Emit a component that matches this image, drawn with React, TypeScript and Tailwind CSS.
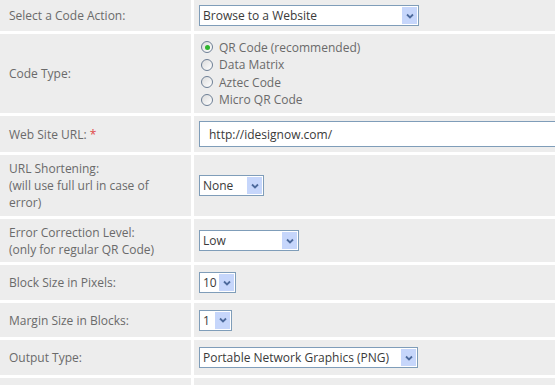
import React from 'react';

function Arrow() {
    return (
        <span className="w-[15px] h-[17px] my-[1px] mr-[1px] shrink-0 flex items-center justify-center bg-[#c6d6fb]">
            <svg width="8" height="6" viewBox="0 0 8 6">
                <path d="M1 1.5 L4 4.5 L7 1.5" fill="none" stroke="#4d6a9c" strokeWidth="1.8" />
            </svg>
        </span>
    );
}

function Select({ value, width }: { value: string; width: string }) {
    return (
        <div className={`h-[21px] ${width} border border-[#7f9db9] bg-white flex items-center text-[#3a3a3a]`}>
            <span className="flex-1 pl-[3px] whitespace-nowrap overflow-hidden">{value}</span>
            <Arrow />
        </div>
    );
}

function Radio({ label, checked = false }: { label: string; checked?: boolean }) {
    return (
        <div className="flex items-center gap-[6px] h-[17.5px]">
            <span className="w-[12px] h-[12px] rounded-full border border-[#6d7f95] bg-gradient-to-br from-[#dcdcdc] to-white flex items-center justify-center">
                {checked && <span className="w-[5px] h-[5px] rounded-full bg-[#2fb52f]" />}
            </span>
            <span>{label}</span>
        </div>
    );
}

const rows: { label: React.ReactNode; h: string; field: React.ReactNode }[] = [
    {
        label: 'Select a Code Action:',
        h: 'h-[31px]',
        field: <Select value="Browse to a Website" width="w-[220px]" />,
    },
    {
        label: 'Code Type:',
        h: 'h-[79px]',
        field: (
            <div className="flex flex-col pl-[2px]">
                <Radio label="QR Code (recommended)" checked />
                <Radio label="Data Matrix" />
                <Radio label="Aztec Code" />
                <Radio label="Micro QR Code" />
            </div>
        ),
    },
    {
        label: (
            <>
                Web Site URL: <span className="text-[#e04848]">*</span>
            </>
        ),
        h: 'h-[36px]',
        field: (
            <div className="h-[26px] w-[400px] border border-[#7f9db9] bg-white flex items-center pl-[9px] text-[#3a3a3a]">
                http://idesignow.com/
            </div>
        ),
    },
    {
        label: (
            <>
                URL Shortening:
                <br />
                (will use full url in case of
                <br />
                error)
            </>
        ),
        h: 'h-[61px]',
        field: <Select value="None" width="w-[65px]" />,
    },
    {
        label: (
            <>
                Error Correction Level:
                <br />
                (only for regular QR Code)
            </>
        ),
        h: 'h-[43px]',
        field: <Select value="Low" width="w-[100px]" />,
    },
    {
        label: 'Block Size in Pixels:',
        h: 'h-[35px]',
        field: <Select value="10" width="w-[37px]" />,
    },
    {
        label: 'Margin Size in Blocks:',
        h: 'h-[34px]',
        field: <Select value="1" width="w-[33px]" />,
    },
    {
        label: 'Output Type:',
        h: 'h-[35px]',
        field: <Select value="Portable Network Graphics (PNG)" width="w-[219px]" />,
    },
    {
        label: '',
        h: 'h-[20px]',
        field: null,
    },
];

export default function App() {
    return (
        <div className="w-[555px] h-[385px] overflow-hidden bg-white font-['Open_Sans',sans-serif] text-[12px] leading-[17px] text-[#6a6a6a]">
            <div className="grid grid-cols-[191px_1fr] gap-x-[3px] gap-y-[3px] w-[600px]">
                {rows.map((r, i) => (
                    <React.Fragment key={i}>
                        <div className={`${r.h} bg-[#ededed] flex items-center pl-[9px]`}>
                            <div>{r.label}</div>
                        </div>
                        <div className={`${r.h} bg-[#ededed] flex items-center pl-[5px]`}>{r.field}</div>
                    </React.Fragment>
                ))}
            </div>
        </div>
    );
}
